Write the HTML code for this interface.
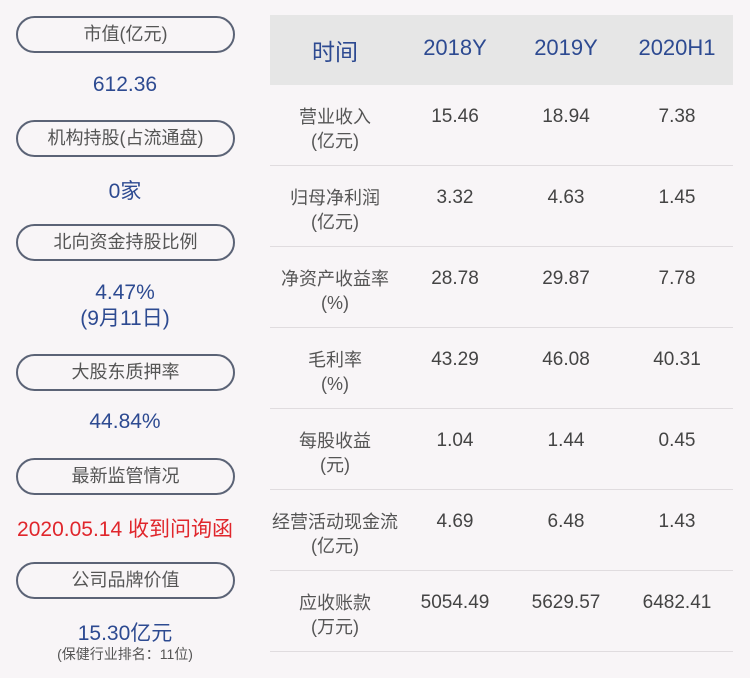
<!DOCTYPE html>
<html><head><meta charset="utf-8"><style>
body{margin:0;width:750px;height:678px;background:#f8f5f7;font-family:"Liberation Sans","Noto Sans CJK SC",sans-serif;position:relative;overflow:hidden}
.p{position:absolute;left:16px;width:215px;height:33px;border:2px solid #5b6376;border-radius:19px;text-align:center;line-height:33px;font-size:18px;color:#555}
.v{position:absolute;left:0;width:250px;text-align:center;font-size:21px;color:#2d4a91}
.t{position:absolute;text-align:center}
.hd{position:absolute;left:270px;top:15px;width:463px;height:70px;background:#e6e6e6}
.line{position:absolute;left:270px;width:463px;height:1px;background:#e0dcdf}
.lb{position:absolute;left:270px;width:130px;text-align:center;font-size:18px;color:#555;line-height:24px}
.c{position:absolute;width:110px;text-align:center;font-size:19px;color:#444}
</style></head><body>
<div class="p" style="top:16px">市值(亿元)</div>
<div class="v" style="top:73px">612.36</div>
<div class="p" style="top:120px">机构持股(占流通盘)</div>
<div class="v" style="top:175px">0家</div>
<div class="p" style="top:224px">北向资金持股比例</div>
<div class="v" style="top:280px;line-height:26px">4.47%<br>(9月11日)</div>
<div class="p" style="top:354px">大股东质押率</div>
<div class="v" style="top:410px">44.84%</div>
<div class="p" style="top:458px">最新监管情况</div>
<div class="v" style="top:513px;color:#e0262c">2020.05.14 收到问询函</div>
<div class="p" style="top:562px">公司品牌价值</div>
<div class="v" style="top:617px">15.30亿元</div>
<div class="v" style="top:644px;font-size:14px;color:#555">(保健行业排名：11位)</div>

<div class="hd"></div>
<div class="c" style="left:280px;top:33px;font-size:23px;color:#2d4a91">时间</div>
<div class="c" style="left:400px;top:35px;font-size:22px;color:#2d4a91">2018Y</div>
<div class="c" style="left:511px;top:35px;font-size:22px;color:#2d4a91">2019Y</div>
<div class="c" style="left:622px;top:35px;font-size:22px;color:#2d4a91">2020H1</div>

<div class="line" style="top:165px"></div><div class="line" style="top:246px"></div><div class="line" style="top:327px"></div><div class="line" style="top:408px"></div><div class="line" style="top:489px"></div><div class="line" style="top:570px"></div><div class="line" style="top:651px"></div>

<div class="lb" style="top:105px">营业收入<br>(亿元)</div>
<div class="c" style="left:400px;top:106px">15.46</div><div class="c" style="left:511px;top:106px">18.94</div><div class="c" style="left:622px;top:106px">7.38</div>
<div class="lb" style="top:186px">归母净利润<br>(亿元)</div>
<div class="c" style="left:400px;top:187px">3.32</div><div class="c" style="left:511px;top:187px">4.63</div><div class="c" style="left:622px;top:187px">1.45</div>
<div class="lb" style="top:267px">净资产收益率<br>(%)</div>
<div class="c" style="left:400px;top:268px">28.78</div><div class="c" style="left:511px;top:268px">29.87</div><div class="c" style="left:622px;top:268px">7.78</div>
<div class="lb" style="top:348px">毛利率<br>(%)</div>
<div class="c" style="left:400px;top:349px">43.29</div><div class="c" style="left:511px;top:349px">46.08</div><div class="c" style="left:622px;top:349px">40.31</div>
<div class="lb" style="top:429px">每股收益<br>(元)</div>
<div class="c" style="left:400px;top:430px">1.04</div><div class="c" style="left:511px;top:430px">1.44</div><div class="c" style="left:622px;top:430px">0.45</div>
<div class="lb" style="top:510px">经营活动现金流<br>(亿元)</div>
<div class="c" style="left:400px;top:511px">4.69</div><div class="c" style="left:511px;top:511px">6.48</div><div class="c" style="left:622px;top:511px">1.43</div>
<div class="lb" style="top:591px">应收账款<br>(万元)</div>
<div class="c" style="left:400px;top:592px">5054.49</div><div class="c" style="left:511px;top:592px">5629.57</div><div class="c" style="left:622px;top:592px">6482.41</div>
</body></html>
